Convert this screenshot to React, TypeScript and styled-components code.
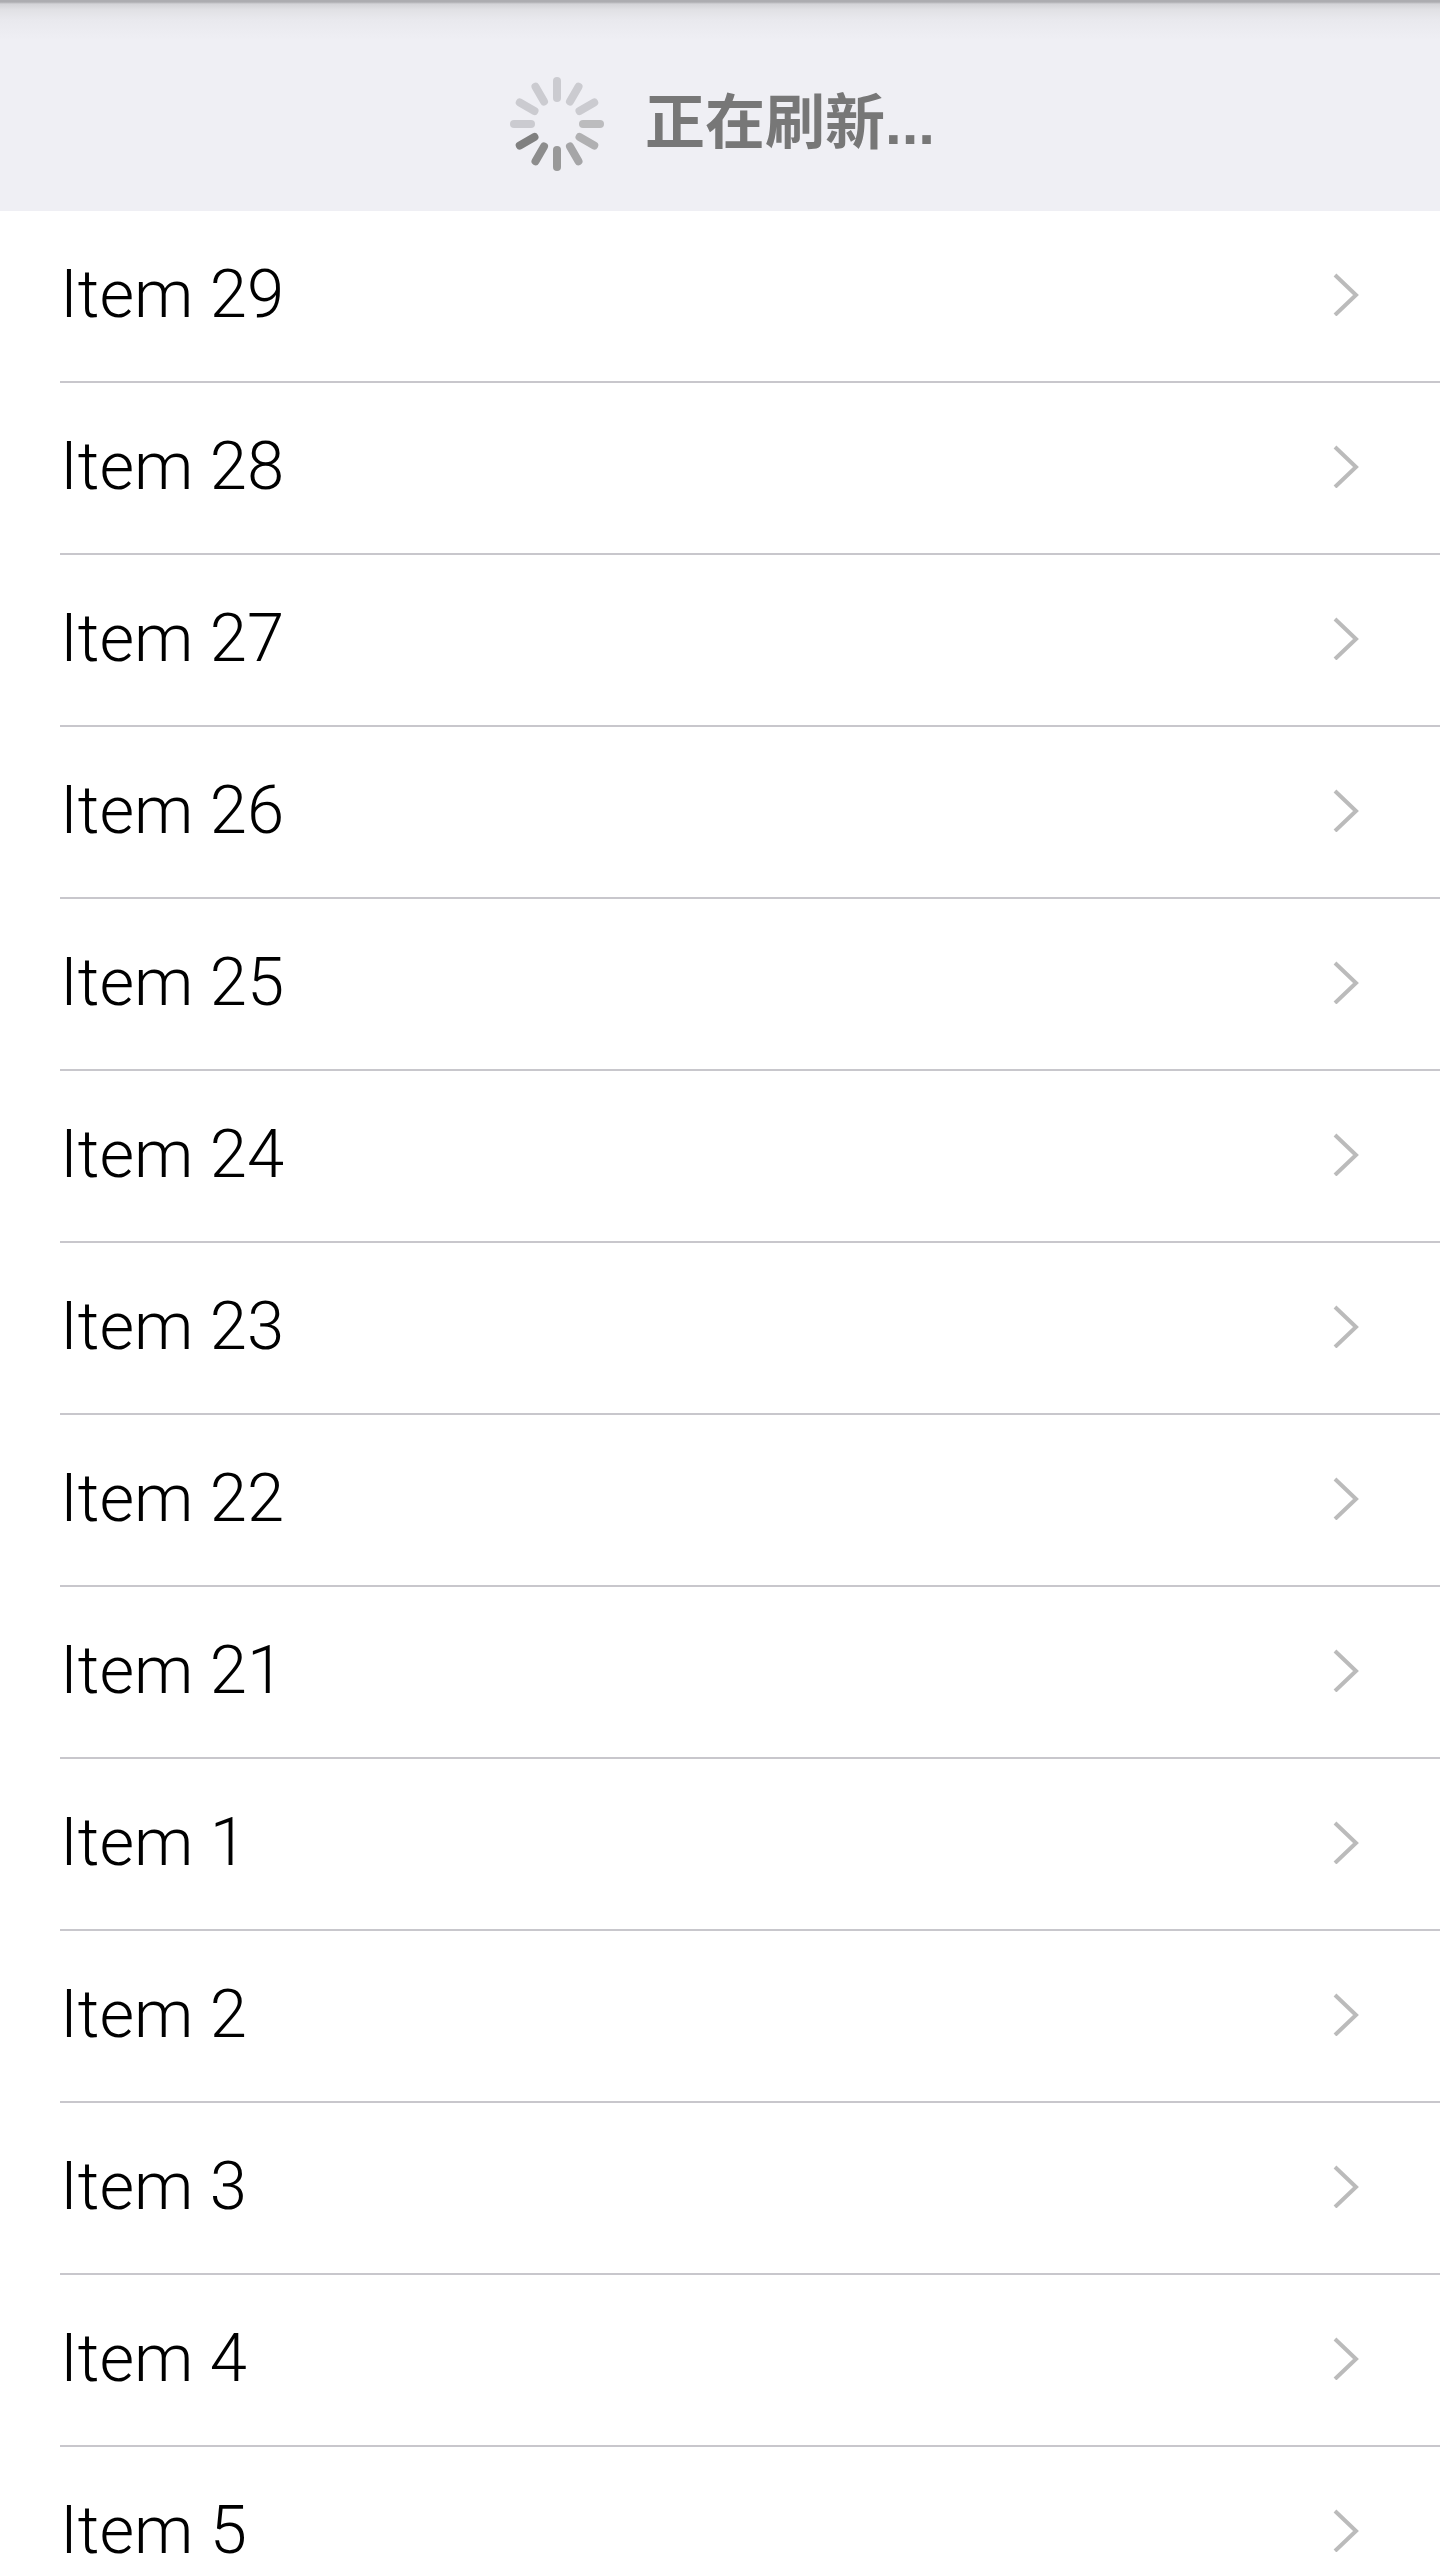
import React from "react";
import styled, { createGlobalStyle } from "styled-components";

const GlobalStyle = createGlobalStyle`
  html, body { margin: 0; background: #fff; }
`;

const Screen = styled.main`
  height: 100vh;
  overflow: hidden;
  background: #fff;
`;

const RefreshBar = styled.header`
  display: flex;
  align-items: center;
  justify-content: center;
  gap: 40px;
  padding: 76px 0 39px 4px;
  background: linear-gradient(#acacb0 0, #acacb0 2px, #d3d3d7 4px, #e1e1e5 10px, #e9e9ee 20px, #efeff4 40px);
`;

const SpinnerIcon = styled.svg`
  width: 96px;
  height: 96px;
`;

const RefreshText = styled.span`
  font: bold 60px/96px "Liberation Sans", "Noto Sans CJK SC", sans-serif;
  color: #777;
`;

const List = styled.ul`
  list-style: none;
  margin: 0;
  padding: 0 0 0 60px;
`;

const Row = styled.li`
  border-bottom: 2px solid #c8c7cc;
`;

const RowLink = styled.a`
  box-sizing: border-box;
  display: flex;
  align-items: center;
  justify-content: space-between;
  height: 170px;
  padding: 0 80px 4px 0;
  color: #000;
  text-decoration: none;
  font: 300 67px/96px Roboto, sans-serif;
`;

const Chevron = styled.svg`
  width: 28px;
  height: 44px;
`;

const SPOKES = ["#cbcbd0", "#cbcbd0", "#cbcbd0", "#bcbcbe", "#b0b0b2", "#a5a5a7", "#999", "#8d8d8d", "#808080", "#cbcbd0", "#cbcbd0", "#cbcbd0"];
const ITEMS = [29, 28, 27, 26, 25, 24, 23, 22, 21, 1, 2, 3, 4, 5];

export default function App() {
  return (
    <Screen>
      <GlobalStyle />
      <RefreshBar role="status">
        <SpinnerIcon viewBox="-48 -48 96 96" aria-hidden="true">
          {SPOKES.map((color, i) => (
            <line key={i} y1="-43" y2="-26" stroke={color} strokeWidth="8" strokeLinecap="round" transform={`rotate(${i * 30})`} />
          ))}
        </SpinnerIcon>
        <RefreshText>正在刷新...</RefreshText>
      </RefreshBar>
      <List>
        {ITEMS.map((n) => (
          <Row key={n}>
            <RowLink href={`#item-${n}`}>
              Item {n}
              <Chevron viewBox="0 0 28 44" aria-hidden="true">
                <path d="M3 3 L24 23 L3 43" fill="none" stroke="#bbb" strokeWidth="4" />
              </Chevron>
            </RowLink>
          </Row>
        ))}
      </List>
    </Screen>
  );
}
